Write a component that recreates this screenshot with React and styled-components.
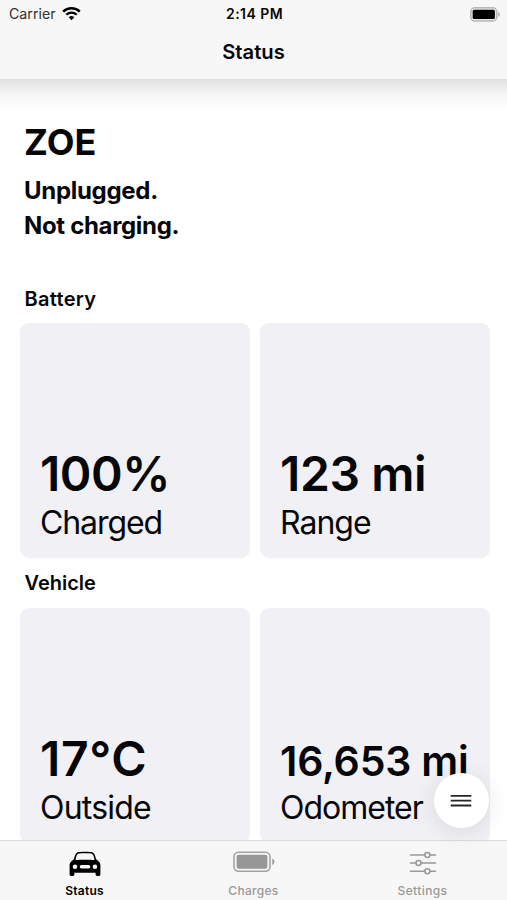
import React from "react";
import styled, { createGlobalStyle } from "styled-components";

const GlobalStyle = createGlobalStyle`
  *, *::before, *::after { box-sizing: border-box; }
  html, body { margin: 0; padding: 0; background: #fff; overflow: hidden; }
  body { font-family: Inter, "Liberation Sans", sans-serif; color: #060608; }
  svg { display: block; flex: none; }
`;

const Screen = styled.div`
  position: relative;
  width: 507px;
  height: 900px;
  display: flex;
  flex-direction: column;
  overflow: hidden;
  background: #fff;
`;

const Header = styled.header`
  position: relative;
  flex: none;
  height: 79px;
  background: #f7f7f7;

  &::after {
    content: "";
    position: absolute;
    top: 100%;
    left: 0;
    right: 0;
    height: 32px;
    background: linear-gradient(#dedede 0, #e5e5e5 3px, #eeeeee 10px, #f8f8f8 18px, #fff 100%);
  }
`;

const StatusBar = styled.div`
  display: grid;
  grid-template-columns: 1fr auto 1fr;
  align-items: center;
  height: 28px;
  padding: 0 7px 0 9px;
  font-size: 14.2px;
  line-height: 28px;
`;

const Carrier = styled.div`
  display: flex;
  align-items: center;
  gap: 6px;
  color: #303032;
`;

const Clock = styled.div`
  font-weight: 600;
  font-size: 14px;
  letter-spacing: 0.45px;
`;

const Power = styled.div`
  display: flex;
  justify-content: flex-end;
`;

const NavTitle = styled.h1`
  margin: 0;
  text-align: center;
  font-size: 20.2px;
  font-weight: 600;
  line-height: 48px;
`;

const Content = styled.main`
  flex: 1;
  min-height: 0;
  overflow: hidden;
  padding: 41px 17px 0 20px;
`;

const Summary = styled.section`
  position: relative;
  height: 159px;
  padding-left: 4px;
  font-weight: 700;
`;

const CarName = styled.h2`
  margin: 0 0 10px;
  font-size: 36px;
  line-height: 44px;
  font-weight: 700;
`;

const StateLine = styled.p`
  margin: 0;
  font-size: 24px;
  line-height: 34.5px;
  letter-spacing: ${(p) => p.$track || 0}px;
`;

const SectionTitle = styled.h3`
  margin: 0;
  height: 44px;
  padding: 7px 0 0 4.5px;
  font-size: 20px;
  line-height: ${(p) => p.$line || 26}px;
  font-weight: 600;
  letter-spacing: ${(p) => p.$track || 0}px;
`;

const CardRow = styled.div`
  display: grid;
  grid-template-columns: 1fr 1fr;
  gap: 10px;
  margin-bottom: 5.5px;
`;

const Card = styled.article`
  display: flex;
  flex-direction: column;
  justify-content: flex-end;
  height: 235px;
  padding: 0 0 15px 20px;
  border-radius: 9px;
  background: #f1f0f5;
  white-space: nowrap;
`;

const Value = styled.div`
  font-size: ${(p) => p.$size || 48}px;
  font-weight: 600;
  line-height: ${(p) => p.$line || 58}px;
  letter-spacing: ${(p) => p.$track || 0}px;
`;

const Label = styled.div`
  font-size: 32px;
  line-height: 40px;
  letter-spacing: ${(p) => p.$track || 0}px;
`;

const MenuButton = styled.button`
  position: absolute;
  z-index: 1;
  right: 18.5px;
  bottom: 72px;
  width: 55px;
  height: 55px;
  display: grid;
  place-items: center;
  padding: 0;
  border: 0;
  border-radius: 50%;
  background: #fff;
  color: #252527;
  box-shadow: 0 3px 24px rgba(0, 0, 0, 0.1);
`;

const TabBar = styled.nav`
  flex: none;
  height: 60px;
  display: grid;
  grid-template-columns: repeat(3, 1fr);
  border-top: 1px solid #dadada;
  background: #f7f7f7;
`;

const Tab = styled.a`
  display: flex;
  flex-direction: column;
  align-items: center;
  color: ${(p) => (p.$active ? "#000" : "#999")};
  font-size: 12px;
  font-weight: ${(p) => (p.$active ? 600 : 500)};
  letter-spacing: ${(p) => p.$track || 0}px;
  line-height: 16px;
`;

const TabIcon = styled.span`
  display: grid;
  place-items: center;
  height: 42px;
  padding-top: ${(p) => p.$drop || 0}px;
`;

const WifiIcon = () => (
  <svg width="19" height="14" viewBox="0 0 19 14" fill="none" stroke="#000">
    <path d="M1.2 4.700a11.8 11.8 0 0 1 16.6 0" strokeWidth="2.4" />
    <path d="M4.3 7.800a7.4 7.4 0 0 1 10.4 0" strokeWidth="2.2" />
    <path d="M9.5 13.2 6.7 10.3a4 4 0 0 1 5.6 0Z" fill="#000" stroke="none" />
  </svg>
);

const PowerIcon = () => (
  <svg width="31" height="15" viewBox="0 0 31 15">
    <rect x="1.800" y="0.8" width="26" height="13.2" rx="4" fill="#e6e6e6" stroke="#b8b8b8" strokeWidth="1.5" />
    <rect x="3.700" y="2.7" width="22.2" height="9.4" rx="1.6" fill="#000" />
    <path d="M29.200 5v4.8c1-.4 1.700-1.300 1.700-2.400S30.200 5.400 29.200 5Z" fill="#b0b0b0" />
  </svg>
);

const CarIcon = () => (
  <svg width="32" height="26" viewBox="0 0 32 26">
    <path
      fillRule="evenodd"
      fill="#000"
      d="M8.500 1.200C10 .5 22 .5 23.500 1.200c1.800.7 2.800 3.500 3.500 6.900l2.900 2.600c1.200 1.200 1.500 2 1.500 4V23.500a1.400 1.400 0 0 1-1.400 1.400h-2a1.400 1.400 0 0 1-1.400-1.400V21.700H5.400v1.800A1.400 1.400 0 0 1 4 24.900H2A1.400 1.400 0 0 1 .6 23.500V14.700c0-2 .3-2.800 1.500-4l2.900-2.600c.7-3.400 1.700-6.200 3.500-6.900ZM9.500 2.500C8 2.900 7.100 5.200 6.500 9.100c5-.5 14-.5 19 0C24.900 5.200 24 2.900 22.500 2.500 20 2 12 2 9.500 2.500ZM6 13.400a2.300 2.300 0 1 0 0 4.600 2.300 2.300 0 0 0 0-4.600Zm20 0a2.300 2.300 0 1 0 0 4.600 2.300 2.300 0 0 0 0-4.600ZM12.400 14a1.700 1.700 0 0 0 0 3.400h7.200a1.700 1.700 0 0 0 0-3.400Z"
    />
  </svg>
);

const BatteryIcon = () => (
  <svg width="42" height="22" viewBox="0 0 42 22">
    <rect x="1" y="1.200" width="36" height="19" rx="4.500" fill="none" stroke="#a2a2a2" strokeWidth="1.600" />
    <rect x="3.600" y="3.700" width="30.800" height="14" rx="2" fill="#979797" />
    <path d="M39.300 7.500v6.400c1.300-.5 2.100-1.700 2.100-3.200s-.8-2.700-2.100-3.200Z" fill="#999" />
  </svg>
);

const SlidersIcon = () => (
  <svg width="28" height="24" viewBox="0 0 28 24" fill="none" stroke="#999" strokeWidth="1.600" strokeLinecap="round">
    <path d="M1.500 4h14.200M21.200 4h5.300M1.500 12h5.300M12.300 12h14.200M1.500 20.300h14.200M21.200 20.300h5.300" />
    <circle cx="18.400" cy="4" r="2.500" />
    <circle cx="9.500" cy="12" r="2.500" />
    <circle cx="18.400" cy="20.300" r="2.500" />
  </svg>
);

const MenuIcon = () => (
  <svg width="22" height="14" viewBox="0 0 22 14" stroke="currentColor" strokeWidth="1.800">
    <path d="M.7 1.900h20.600M.7 6.700h20.600M.7 11.500h20.600" />
  </svg>
);

export default function App() {
  return (
    <Screen>
      <GlobalStyle />
      <Header>
        <StatusBar>
          <Carrier>Carrier<WifiIcon /></Carrier>
          <Clock>2:14 PM</Clock>
          <Power><PowerIcon /></Power>
        </StatusBar>
        <NavTitle>Status</NavTitle>
      </Header>
      <Content>
        <Summary>
          <CarName>ZOE</CarName>
          <StateLine $track={-0.3}>Unplugged.</StateLine>
          <StateLine $track={-0.33}>Not charging.</StateLine>
        </Summary>
        <SectionTitle $track={0.3}>Battery</SectionTitle>
        <CardRow>
          <Card>
            <Value $track={-0.5}>100%</Value>
            <Label $track={-1.1}>Charged</Label>
          </Card>
          <Card>
            <Value $track={-0.4}>123 mi</Value>
            <Label $track={-1}>Range</Label>
          </Card>
        </CardRow>
        <SectionTitle $line={25}>Vehicle</SectionTitle>
        <CardRow>
          <Card>
            <Value $track={0.7}>17°C</Value>
            <Label $track={-0.8}>Outside</Label>
          </Card>
          <Card>
            <Value $size={41} $line={53} $track={-0.2}>16,653 mi</Value>
            <Label $track={-1}>Odometer</Label>
          </Card>
        </CardRow>
      </Content>
      <TabBar>
        <Tab $active $track={0.25}><TabIcon $drop={3}><CarIcon /></TabIcon>Status</Tab>
        <Tab $track={0.3}><TabIcon><BatteryIcon /></TabIcon>Charges</Tab>
        <Tab $track={0.4}><TabIcon $drop={2}><SlidersIcon /></TabIcon>Settings</Tab>
      </TabBar>
      <MenuButton aria-label="Menu"><MenuIcon /></MenuButton>
    </Screen>
  );
}
